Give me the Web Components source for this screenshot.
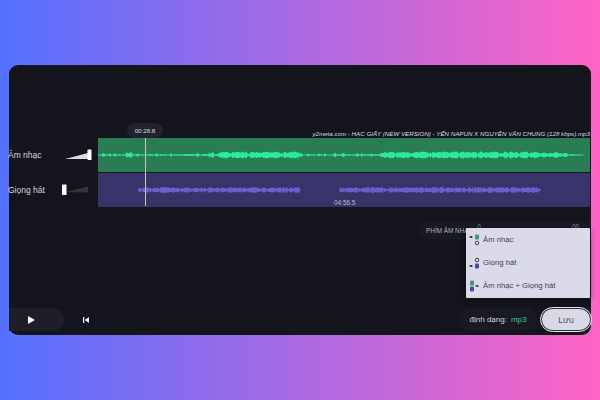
<!DOCTYPE html>
<html lang="vi"><head><meta charset="utf-8">
<style>
html,body{margin:0;padding:0}
body{width:600px;height:400px;overflow:hidden;background:linear-gradient(90deg,#5470ff 0%,#ff64c4 100%);font-family:"Liberation Sans",Arial,sans-serif;color:#d8d8dc}
</style></head><body>
<editor-panel>
  <track-row slot="tracks" label="Âm nhạc" kind="music" vol="1" name="y2meta.com - HẠC GIẤY (NEW VERSION) - YẾN NAPUN X NGUYỄN VĂN CHUNG (128 kbps).mp3"></track-row>
  <track-row slot="tracks" label="Giọng hát" kind="voice" vol="0" time="04:56.5"></track-row>
</editor-panel>
<script>
const el=(name,html)=>customElements.define(name,class extends HTMLElement{
  connectedCallback(){ if(this.shadowRoot) return; this.attachShadow({mode:'open'}).innerHTML=html(this); }
});
function rnd(seed){let s=seed;return()=>(s=(s*16807)%2147483647)/2147483647}
function wave(w,h,segs,seed,step,bump){
  const r=rnd(seed),top=[],bot=[];
  for(let x=0;x<=w;x+=step){
    let a=0;
    for(const [x0,x1,v0,v1] of segs){ if(x>=x0&&x<=x1){const t=(x-x0)/(x1-x0||1);a=v0+(v1-v0)*t;} }
    let y=0;
    if(a>0){ y=a*(.55+.45*r()); const q=r(); if(a<2&&q>.88) y=a*2.4; if(a>=2&&q<bump) y=a*.3; }
    top.push(x+','+(h/2-y).toFixed(1)); bot.unshift(x+','+(h/2+y).toFixed(1));
  }
  return top.concat(bot).join(' ');
}
el('track-row',t=>{
  const music=t.getAttribute('kind')==='music', W=492,H=34;
  const segs=music?[[0,28,.7,.9],[28,34,2.8,3.2],[34,90,.7,.9],[90,119,1,1.2],[119,205,3.4,3.4],[205,282,.7,.9],[282,290,2.8,3.3],[290,440,3.6,3.6],[440,470,3.2,2.4],[470,486,1,.4]]:[[40,202,3,3],[242,442,3,3]];
  const vol=t.getAttribute('vol')==='1';
  return `<style>
  :host{display:grid;grid-template-columns:89px 492px;height:34px;align-items:center;position:relative}
  .ctl{display:flex;align-items:center;height:100%;justify-content:space-between;padding-right:${vol?'6px':'9px'}}
  .lab{font-size:8.5px;color:#d6d6da;margin-left:-1px;white-space:nowrap}
  .sl{position:relative;width:27px;height:14px;flex:none}
  .sl svg{display:block}
  .wave{height:34px;background:${music?'#2a7c55':'#37346a'};border-radius:1px;display:block;position:relative}
  .wave svg{display:block}
  .name{position:absolute;right:0;bottom:100%;margin-bottom:1px;font-size:6.2px;font-style:italic;white-space:nowrap;color:#dcdce2}
  .time{position:absolute;left:236px;bottom:1px;font-size:6.4px;color:#b9b9c4}
  </style>
  <div class="ctl"><span class="lab">${t.getAttribute('label')}</span>
  <span class="sl"><svg width="27" height="14" viewBox="0 0 27 14">
    ${vol?'<path d="M0 11 23 5V11Z" fill="#dcdce0"/><rect x="22.500" y="1.500" width="4" height="10.500" rx=".8" fill="#fff"/>'
         :'<path d="M4 9 26 3.500V9.500Z" fill="#34343c"/><rect x="0" y="1.500" width="4.500" height="10.500" rx=".8" fill="#fff"/>'}
  </svg></span></div>
  <div class="wave">
    <svg width="${W}" height="${H}"><polygon fill="${music?'#27ee96':'#6b5dca'}" points="${wave(W,H,segs,music?77:1234,1.2,music?.08:.2)}"/></svg>
    ${t.hasAttribute('name')?`<span class="name">${t.getAttribute('name')}</span>`:''}
    ${t.hasAttribute('time')?`<span class="time">${t.getAttribute('time')}</span>`:''}
  </div>`;
});
el('time-head',()=>`<style>
  :host{position:absolute;left:136px;top:58px;width:0;height:83px;display:block}
  .p{position:absolute;left:-18px;top:0;width:36px;height:15px;border-radius:8px;background:#22222c;color:#dcdce0;font-size:6.2px;display:flex;align-items:center;justify-content:center}
  .l{position:absolute;left:-.5px;top:15px;width:1px;bottom:0;background:#c6c6c8}
</style><div class="p">00:28.8</div><div class="l"></div>`);
el('mode-menu',()=>{
  const g='#3a9d78',b='#4a4aa6';
  const ic=(s)=>`<svg width="15" height="18" viewBox="0 0 15 18">${s}</svg>`;
  const arr=(x,y)=>`<path d="M${x-2} ${y}H${x}" stroke="#222" stroke-width=".7"/><circle cx="${x+.4}" cy="${y}" r="1.100" fill="#222"/>`;
  const ring=(x,y)=>`<circle cx="${x}" cy="${y}" r="1.800" fill="none" stroke="#333" stroke-width=".9"/>`;
  const sq=(x,y,c)=>`<rect x="${x-2}" y="${y-2.500}" width="4" height="5" rx="1.200" fill="${c}"/>`;
  const items=[
   ['Âm nhạc',ic(arr(3,6)+sq(9,6,g)+ring(9,12))],
   ['Giọng hát',ic(ring(9,6)+arr(3,12)+sq(9,12,b))],
   ['Âm nhạc + Giọng hát',ic(sq(4,6,g)+sq(4,12,b)+arr(9,9))]
  ];
  return `<style>
  :host{position:absolute;left:457px;top:163px;width:124px;height:69px;background:#dadae8;border-radius:1px;box-shadow:0 2px 6px #0006;display:flex;flex-direction:column;justify-content:space-around;padding:0 0 1px}
  .i{display:flex;align-items:center;padding-left:2px;font-size:7.7px;color:#44444c;white-space:nowrap}
  svg{display:block;flex:none}
  </style>${items.map(i=>`<div class="i">${i[1]}<span>${i[0]}</span></div>`).join('')}`;
});
el('editor-panel',()=>`<style>
  :host{display:block;position:absolute;left:9px;top:65px;width:582px;height:270px;box-sizing:border-box;background:#14141d;border-radius:9px;overflow:visible}
  .w{display:flex;flex-direction:column;height:100%}
  .tracks{display:flex;flex-direction:column;gap:1px;margin-top:73px}
  .hint{display:flex;align-items:center;margin:15px 0 0 410px;height:17px;width:172px;border-radius:9px 0 0 9px;background:#191922;font-size:6.4px;color:#b0b0b8;padding:0 12px 0 7px;box-sizing:border-box}
  .hint span{white-space:nowrap}
  .hint .up{margin-bottom:9px;color:#8c8c96}
  .hint .a{margin-left:4px}
  .hint .b{margin-left:auto}
  .bar{margin-top:auto;height:23px;margin-bottom:4px;display:flex;align-items:center}
  .play{width:55px;height:23px;border-radius:0 12px 12px 0;background:#1e1e29;display:flex;align-items:center;justify-content:center;padding-right:10px;box-sizing:border-box}
  .prev{margin-left:19px;display:flex}
  .sp{flex:1}
  .fmt{height:23px;width:78px;box-sizing:border-box;border-radius:12px;background:#191923;font-size:8px;color:#d4d4d8;display:flex;align-items:center;justify-content:center;gap:4px;white-space:nowrap}
  .fmt b{font-weight:400;color:#3fcf88}
  .save{margin-left:4px;width:50px;height:23px;box-sizing:border-box;border-radius:12px;background:#dadae6;border:1.500px solid #2c2c34;outline:1px solid #e6e6ea;color:#55555e;font-size:8.8px;display:flex;align-items:center;justify-content:center}
  </style><div class="w">
   <div class="tracks"><slot name="tracks"></slot></div>
   <div class="hint"><span>PHÍM ÂM NHẠC</span><span class="up a">0</span><span class="up b">00</span></div>
   <div class="bar">
     <div class="play"><svg width="7" height="8" viewBox="0 0 7 8"><path d="M0 0 7 4 0 8Z" fill="#f4f4f6"/></svg></div>
     <div class="prev"><svg width="6" height="6" viewBox="0 0 6 6"><rect x="0" y="0" width="1.300" height="6" fill="#eee"/><path d="M6 0V6L1.800 3Z" fill="#eee"/></svg></div>
     <div class="sp"></div>
     <div class="fmt"><span>định dạng:</span><b>mp3</b></div>
     <div class="save">Lưu</div>
   </div></div>
   <time-head></time-head><mode-menu></mode-menu>`);
</script>
</body></html>
